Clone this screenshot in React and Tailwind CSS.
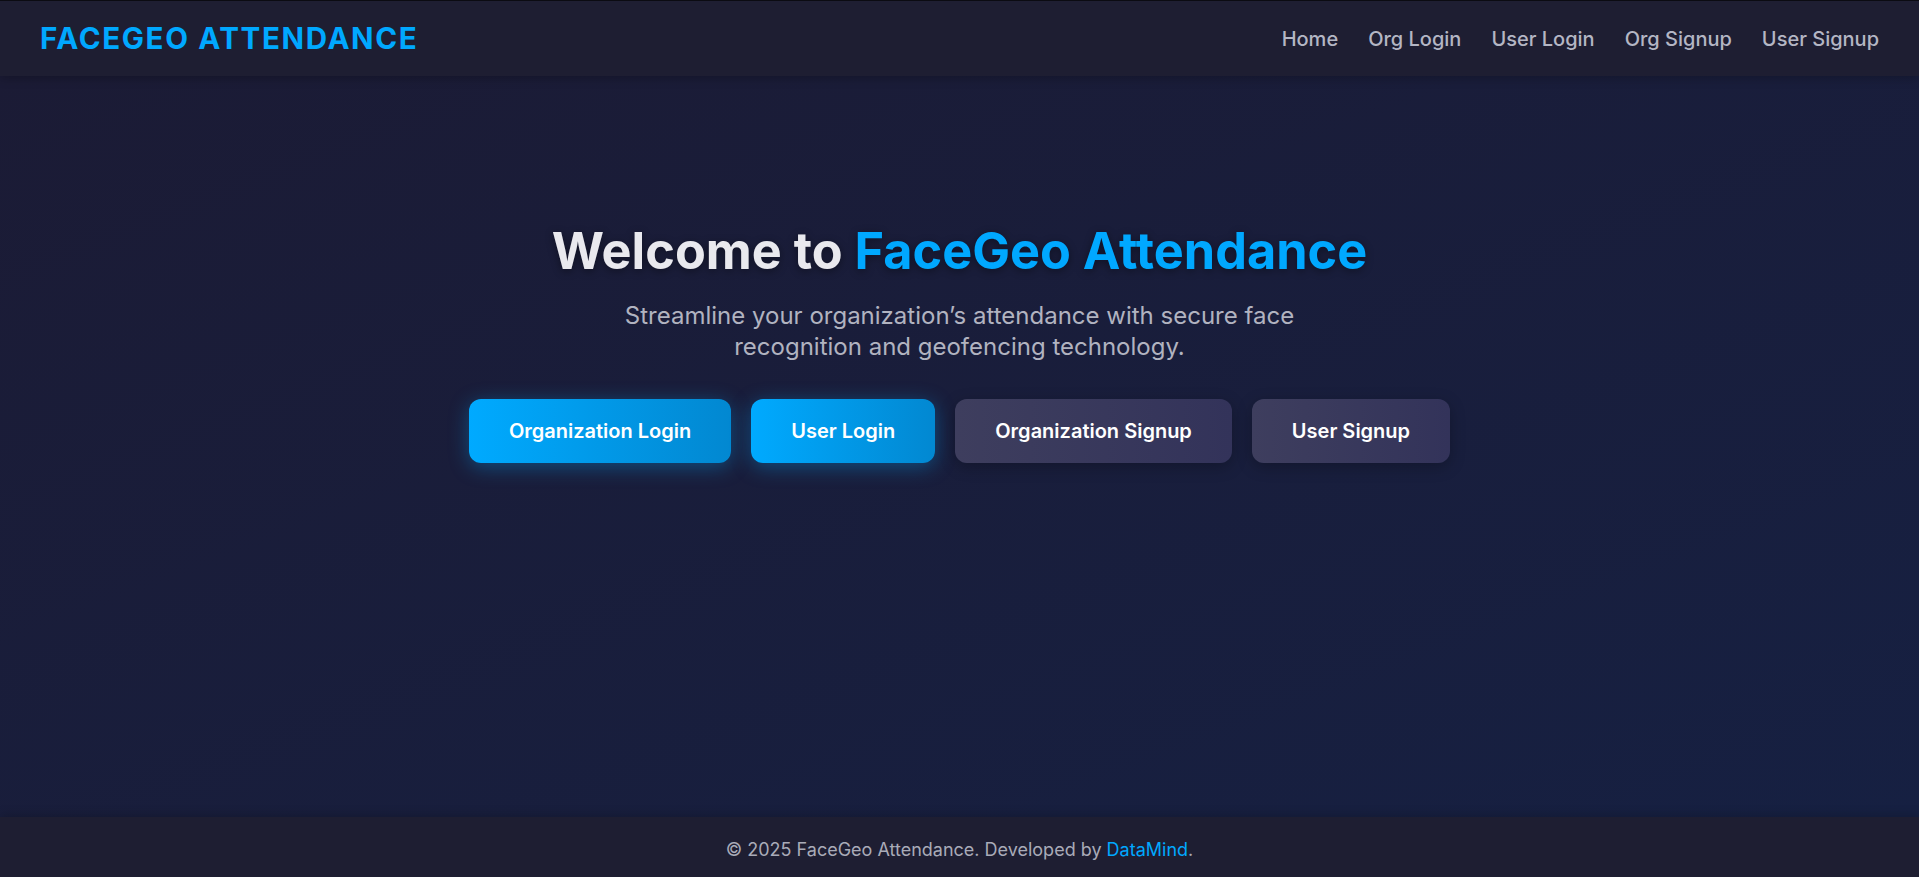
import React from "react";

export default function App() {
  const font = { fontFamily: "Inter, 'Noto Sans', sans-serif" };
  const btn = "px-10 py-[18px] leading-[28px] text-[20px] font-semibold text-white rounded-xl";
  return (
    <div style={font} className="min-h-screen flex flex-col bg-[#1a1c36]">
      <header className="relative z-10 h-[76px] flex items-center justify-between px-10 bg-[#1e1e32] border-t border-[#0b0b12] shadow-[0_2px_10px_rgba(0,0,0,0.25)]">
        <div className="text-[29.6px] font-bold tracking-[1.6px] text-[#00a8ff] leading-none">FACEGEO ATTENDANCE</div>
        <nav className="flex items-center gap-[30px] text-[20px] font-medium text-[#b4b6c4]">
          <a href="#">Home</a>
          <a href="#">Org Login</a>
          <a href="#">User Login</a>
          <a href="#">Org Signup</a>
          <a href="#">User Signup</a>
        </nav>
      </header>
      <main className="flex-1 flex flex-col items-center pt-[145px] bg-gradient-to-br from-[#1b1b35] to-[#162042]">
        <h1 className="text-[50.4px] font-bold leading-[60px] text-[#e9e9ee] drop-shadow-[0_2px_4px_rgba(0,0,0,0.4)]">
          Welcome to <span className="text-[#00a8ff]">FaceGeo Attendance</span>
        </h1>
        <p className="mt-[19px] max-w-[720px] text-center text-[24px] leading-[31px] text-[#b1b3c0]">
          Streamline your organization’s attendance with secure face recognition and geofencing technology.
        </p>
        <div className="mt-[37px] flex gap-5">
          <button className={btn + " bg-gradient-to-r from-[#00aaff] to-[#0288d1] shadow-[0_4px_20px_rgba(0,168,255,0.35)]"}>
            Organization Login
          </button>
          <button className={btn + " bg-gradient-to-r from-[#00aaff] to-[#0288d1] shadow-[0_4px_20px_rgba(0,168,255,0.35)]"}>
            User Login
          </button>
          <button className={btn + " bg-gradient-to-r from-[#3e3e5e] to-[#33335a] shadow-[0_4px_15px_rgba(0,0,0,0.25)]"}>
            Organization Signup
          </button>
          <button className={btn + " bg-gradient-to-r from-[#3e3e5e] to-[#33335a] shadow-[0_4px_15px_rgba(0,0,0,0.25)]"}>
            User Signup
          </button>
        </div>
      </main>
      <footer className="h-[60px] pt-1 flex items-center justify-center bg-[#1e1e32] text-[18px] text-[#a9abb8] shadow-[0_-2px_10px_rgba(0,0,0,0.2)]">
        <span>
          © 2025 FaceGeo Attendance. Developed by <span className="text-[#00a8ff]">DataMind</span>.
        </span>
      </footer>
    </div>
  );
}
